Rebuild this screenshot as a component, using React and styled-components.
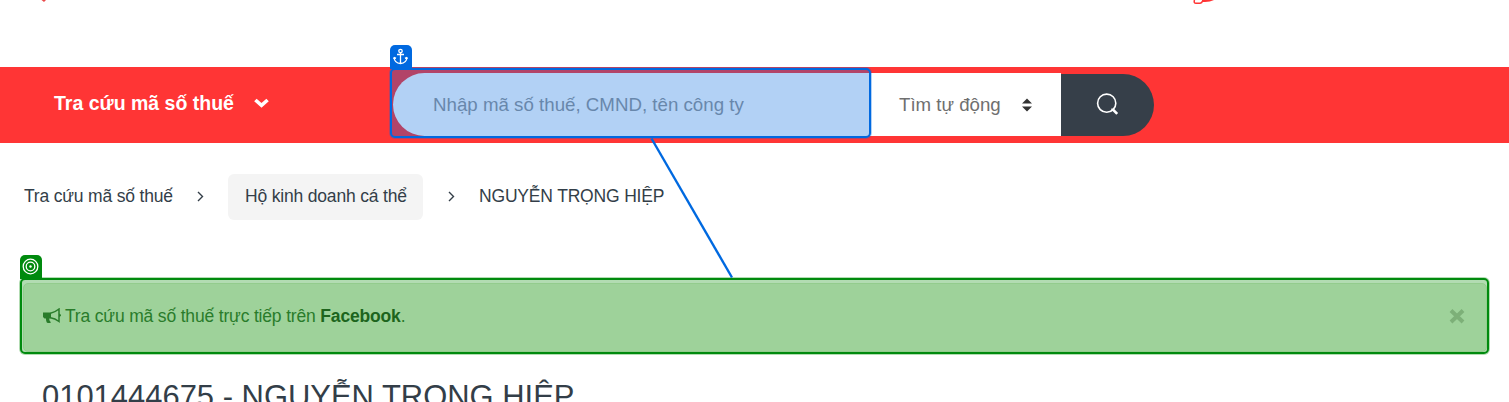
import React from "react";
import styled, { createGlobalStyle } from "styled-components";

const GlobalStyle = createGlobalStyle`
  *, *::before, *::after { box-sizing: border-box; }
  body {
    margin: 0;
    background: #fff;
    color: #333e48;
    font-family: "Liberation Sans", Arial, sans-serif;
    overflow: hidden;
  }
`;

const Page = styled.div`
  position: relative;
  width: 1509px;
  height: 402px;
  overflow: hidden;
`;

const Header = styled.header`
  display: flex;
  height: 67px;
  padding-left: 40px;
  align-items: flex-start;
`;

const LogoTip = styled.svg`
  display: block;
  width: ${(p) => p.$w}px;
  height: 6px;
  margin-left: ${(p) => p.$gap}px;
`;

const NavBar = styled.nav`
  display: flex;
  align-items: flex-start;
  height: 76px;
  padding-left: 54px;
  background: #ff3535;
`;

const MenuButton = styled.div`
  display: flex;
  align-items: center;
  width: 339px;
  height: 72px;
  color: #fff;
  font-size: 19.5px;
  font-weight: 700;
  white-space: nowrap;
`;

const MenuLabel = styled.span`
  width: 199px;
`;

const SearchForm = styled.div`
  display: flex;
  margin-top: 6px;
  height: 63px;
`;

const SearchField = styled.div`
  width: 478px;
  height: 63px;
  padding-left: 40px;
  border-radius: 32px 0 0 32px;
  background: #fff;
  color: #969696;
  font-size: 18.72px;
  line-height: 63px;
  white-space: nowrap;
`;

const SearchSelect = styled.div`
  display: flex;
  align-items: center;
  justify-content: space-between;
  width: 190px;
  height: 63px;
  padding: 0 29px 0 28px;
  background: #fff;
  color: #6f6f6f;
  font-size: 18.67px;
  white-space: nowrap;
`;

const SearchButton = styled.div`
  display: flex;
  align-items: center;
  width: 93px;
  height: 62px;
  margin-top: 1px;
  padding-left: 35px;
  border-radius: 0 31px 31px 0;
  background: #363f49;
`;

const Breadcrumb = styled.div`
  display: flex;
  align-items: center;
  height: 46px;
  margin: 31px 0 0 24px;
  font-size: 17.5px;
  letter-spacing: -0.18px;
  white-space: nowrap;
`;

const Crumb = styled.span`
  width: ${(p) => p.$w}px;
  height: 46px;
  line-height: 44px;
`;

const CrumbBox = styled(Crumb)`
  padding-left: 17px;
  border-radius: 6px;
  background: #f4f4f4;
`;

const CrumbArrow = styled.svg`
  width: 7px;
  height: 11px;
  margin: 0 ${(p) => p.$after}px 2px ${(p) => p.$before}px;
`;

const Alert = styled.div`
  display: flex;
  align-items: center;
  width: 1464px;
  height: 69px;
  margin: 63px 0 0 23px;
  padding: 0 21px 3px 19px;
  border: 1px solid #d3e9ca;
  border-radius: 5px;
  background: #e2f1dd;
  color: #3c763d;
  font-size: 17.5px;
  letter-spacing: -0.17px;
  white-space: nowrap;
`;

const Strong = styled.b`
  color: #2b542c;
`;

const AlertText = styled.span`
  flex: 1;
  margin-left: 4px;
`;

const Title = styled.h1`
  margin: 27px 0 0 42px;
  font-size: 30.95px;
  font-weight: 400;
  line-height: 36px;
  white-space: nowrap;
`;

const Highlight = styled.div`
  position: absolute;
  left: ${(p) => p.$x}px;
  top: ${(p) => p.$y}px;
  width: ${(p) => p.$w}px;
  height: ${(p) => p.$h}px;
  padding: 1px;
  border-radius: 6px;
  background: ${(p) => p.$fill};

  &::before {
    content: "";
    display: block;
    height: 100%;
    border: 2px solid ${(p) => p.$color};
    border-radius: 5px;
  }
`;

const Handle = styled.div`
  position: absolute;
  left: ${(p) => p.$x}px;
  top: ${(p) => p.$y}px;
  display: flex;
  align-items: center;
  justify-content: center;
  width: 22.5px;
  height: 23.5px;
  border-radius: 5px 5px 0 0;
  background: ${(p) => p.$color};
`;

const Connector = styled.svg`
  position: absolute;
  left: 0;
  top: 0;
`;

export default function App() {
  return (
    <Page>
      <GlobalStyle />
      <Header>
        <LogoTip $w={8} $gap={0}>
          <path d="M1.5 0H6L4 2Z" fill="#e94b4b" />
        </LogoTip>
        <LogoTip $w={24} $gap={1144}>
          <path d="M2.5 0Q1.5 3.3 4 3.3H8Q10 3 10.5 1" fill="none" stroke="#ff3535" strokeWidth="1.5" />
          <path d="M10 0H22Q18 2 13 2H10Z" fill="#ff3535" />
        </LogoTip>
      </Header>
      <NavBar>
        <MenuButton>
          <MenuLabel>Tra cứu mã số thuế</MenuLabel>
          <svg width="17" height="11" viewBox="0 0 17 11">
            <path d="M2.4 2L8.5 7.4L14.6 2" fill="none" stroke="#fff" strokeWidth="3.6" />
          </svg>
        </MenuButton>
        <SearchForm>
          <SearchField>Nhập mã số thuế, CMND, tên công ty</SearchField>
          <SearchSelect>
            Tìm tự động
            <svg width="10" height="14" viewBox="0 0 10 14">
              <path d="M0 5.5L5 0.5L10 5.5ZM0 8.5H10L5 13.5Z" fill="#333" />
            </svg>
          </SearchSelect>
          <SearchButton>
            <svg width="24" height="24" viewBox="0 0 24 24" fill="none" stroke="#fff">
              <circle cx="10.7" cy="10.2" r="9.1" strokeWidth="1.6" />
              <path d="M15.3 16.8H17.2L21.2 20.8" strokeWidth="2.6" />
            </svg>
          </SearchButton>
        </SearchForm>
      </NavBar>
      <Breadcrumb>
        <Crumb $w={149}>Tra cứu mã số thuế</Crumb>
        <CrumbArrow $before={24} $after={24} viewBox="0 0 7 11">
          <path d="M1 1L5.5 5.5L1 10" fill="none" stroke="#333e48" strokeWidth="1.4" />
        </CrumbArrow>
        <CrumbBox $w={195}>Hộ kinh doanh cá thể</CrumbBox>
        <CrumbArrow $before={25} $after={24} viewBox="0 0 7 11">
          <path d="M1 1L5.5 5.5L1 10" fill="none" stroke="#333e48" strokeWidth="1.4" />
        </CrumbArrow>
        <Crumb $w={190}>NGUYỄN TRỌNG HIỆP</Crumb>
      </Breadcrumb>
      <Alert>
        <svg width="18" height="16" viewBox="0 0 18 16" fill="#3c763d">
          <path d="M0 4.5H8V10.5H6.3C6.2 12.5 6.8 13.2 8 14.2C7 15.3 5 15.3 3.8 14.4C3 12.8 3 11.5 3 10.5H1.5L0 9Z" />
          <path d="M7.5 5.2C11 4.7 13.5 3 16 1V13.5C13.5 11.5 11 10.2 7.5 9.8" fill="none" stroke="#3c763d" strokeWidth="1.5" />
          <path d="M16 5.5Q18 6 18 7.3Q18 8.4 16 9Z" />
        </svg>
        <AlertText>
          Tra cứu mã số thuế trực tiếp trên <Strong>Facebook</Strong>.
        </AlertText>
        <svg width="16" height="16" viewBox="0 0 16 16">
          <path d="M2 2.5L14 14M14 2.5L2 14" stroke="#b3c0ad" strokeWidth="4" />
        </svg>
      </Alert>
      <Title>0101444675 - NGUYỄN TRỌNG HIỆP</Title>

      <Highlight $x={389} $y={67} $w={483} $h={72} $color="#0069e0" $fill="rgba(0,102,221,.3)" />
      <Handle $x={389.5} $y={45} $color="#0069e0">
        <svg width="15" height="17" viewBox="0 0 15 17" fill="none" stroke="#fff" strokeWidth="1.3">
          <circle cx="7.5" cy="3" r="1.7" />
          <path d="M7.5 4.7V15.5M4 6.5H11M1 9.2C1.3 13 4 15.2 7.5 15.5C11 15.2 13.7 13 14 9.2M1 9.2L0.8 11M1 9.2L3 10.4M14 9.2L14.2 11M14 9.2L12 10.4" />
        </svg>
      </Handle>
      <Highlight $x={19} $y={277} $w={1471} $h={78} $color="#008a0e" $fill="rgba(0,140,0,.3)" />
      <Handle $x={19.5} $y={255} $color="#008a0e">
        <svg width="17" height="17" viewBox="0 0 17 17" fill="none" stroke="#fff" strokeWidth="1.3">
          <circle cx="8.5" cy="8.5" r="7.3" />
          <circle cx="8.5" cy="8.5" r="4.3" />
          <circle cx="8.5" cy="8.5" r="1.2" fill="#fff" stroke="none" />
        </svg>
      </Handle>
      <Connector width="1509" height="402">
        <path d="M651.5 138.5L732 277.5" stroke="#0069e0" strokeWidth="2.4" />
      </Connector>
    </Page>
  );
}
